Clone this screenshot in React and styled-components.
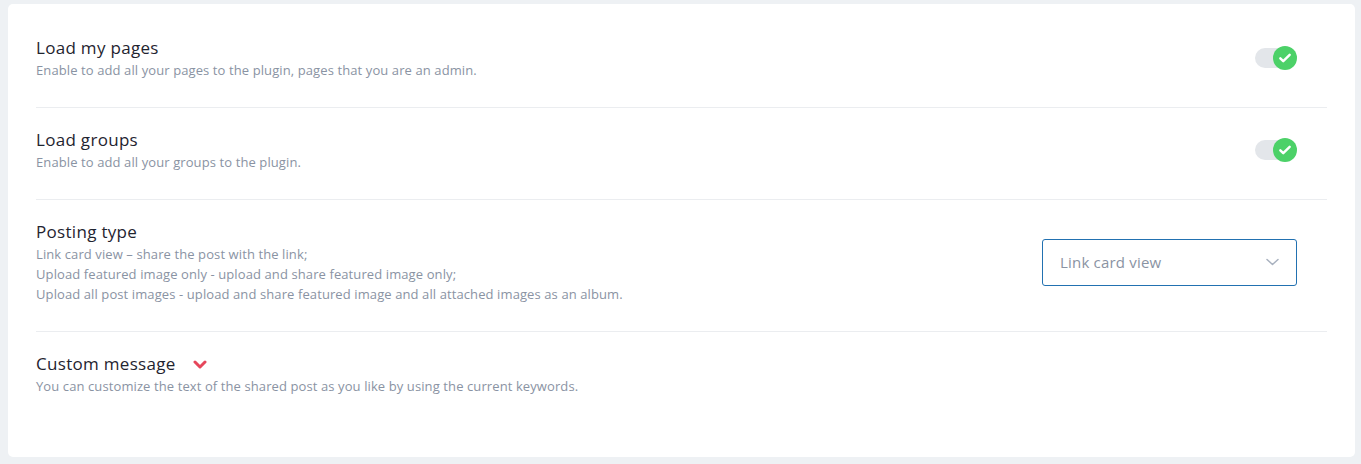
import React from 'react'
import styled, { createGlobalStyle } from 'styled-components'

const GlobalStyle = createGlobalStyle`
  html, body {
    margin: 0;
    padding: 0;
    background: #eef1f4;
    font-family: "Open Sans", "Liberation Sans", sans-serif;
  }
  * { box-sizing: border-box; }
`

const Page = styled.div`
  padding: 4px 6px 7px 8px;
  height: 464px;
`

const Card = styled.section`
  background: #fff;
  border-radius: 5px;
  padding: 12px 28px 32px 28px;
  height: 453px;
`

const Row = styled.div`
  display: flex;
  align-items: center;
  justify-content: space-between;
  padding: 20px 30px 27px 0;
  border-bottom: ${({ last }) => (last ? 'none' : '1px solid #ebedf0')};
`

const Info = styled.div`
  display: flex;
  flex-direction: column;
`

const TitleLine = styled.div`
  display: flex;
  align-items: center;
  gap: 17px;
`

const Title = styled.div`
  font-size: 17px;
  line-height: 24px;
  letter-spacing: 0.3px;
  color: #1f2430;
`

const Desc = styled.div`
  font-size: 13px;
  line-height: 20px;
  letter-spacing: 0.1px;
  color: #8a93a3;
`

const Toggle = styled.div`
  position: relative;
  width: 42px;
  height: 24px;
  display: flex;
  align-items: center;
`

const Track = styled.div`
  width: 38px;
  height: 20px;
  border-radius: 10px;
  background: #e3e6ea;
`

const Knob = styled.div`
  position: absolute;
  right: 0;
  top: 0;
  width: 24px;
  height: 24px;
  border-radius: 50%;
  background: #4cd168;
  display: flex;
  align-items: center;
  justify-content: center;
`

const Select = styled.div`
  width: 255px;
  height: 47px;
  border: 1px solid #2271b1;
  border-radius: 3px;
  display: flex;
  align-items: center;
  justify-content: space-between;
  padding: 0 17px 0 17px;
  font-size: 15px;
  letter-spacing: 0.2px;
  color: #8a93a3;
`

const Check = () => (
  <svg width="14" height="14" viewBox="0 0 24 24" fill="none" stroke="#fff" strokeWidth="4.2" strokeLinecap="round" strokeLinejoin="round">
    <path d="M4 12.5l5 5L20 6.5" />
  </svg>
)

const SelectArrow = () => (
  <svg width="13" height="8" viewBox="0 0 13 8" fill="none" stroke="#a8b1bf" strokeWidth="1.5" strokeLinecap="round" strokeLinejoin="round">
    <path d="M1 1.5l5.5 5 5.5-5" />
  </svg>
)

const ToggleArrow = () => (
  <svg width="14" height="9" viewBox="0 0 14 9" fill="none" stroke="#e6475b" strokeWidth="3" strokeLinecap="round" strokeLinejoin="round">
    <path d="M2 2l5 5 5-5" />
  </svg>
)

const Switch = () => (
  <Toggle>
    <Track />
    <Knob><Check /></Knob>
  </Toggle>
)

const App = () => (
  <Page>
    <GlobalStyle />
    <Card>
      <Row>
        <Info>
          <Title>Load my pages</Title>
          <Desc>Enable to add all your pages to the plugin, pages that you are an admin.</Desc>
        </Info>
        <Switch />
      </Row>
      <Row>
        <Info>
          <Title>Load groups</Title>
          <Desc>Enable to add all your groups to the plugin.</Desc>
        </Info>
        <Switch />
      </Row>
      <Row>
        <Info>
          <Title>Posting type</Title>
          <Desc>Link card view – share the post with the link;</Desc>
          <Desc>Upload featured image only - upload and share featured image only;</Desc>
          <Desc>Upload all post images - upload and share featured image and all attached images as an album.</Desc>
        </Info>
        <Select>
          Link card view
          <SelectArrow />
        </Select>
      </Row>
      <Row last>
        <Info>
          <TitleLine>
            <Title>Custom message</Title>
            <ToggleArrow />
          </TitleLine>
          <Desc>You can customize the text of the shared post as you like by using the current keywords.</Desc>
        </Info>
      </Row>
    </Card>
  </Page>
)

export default App
